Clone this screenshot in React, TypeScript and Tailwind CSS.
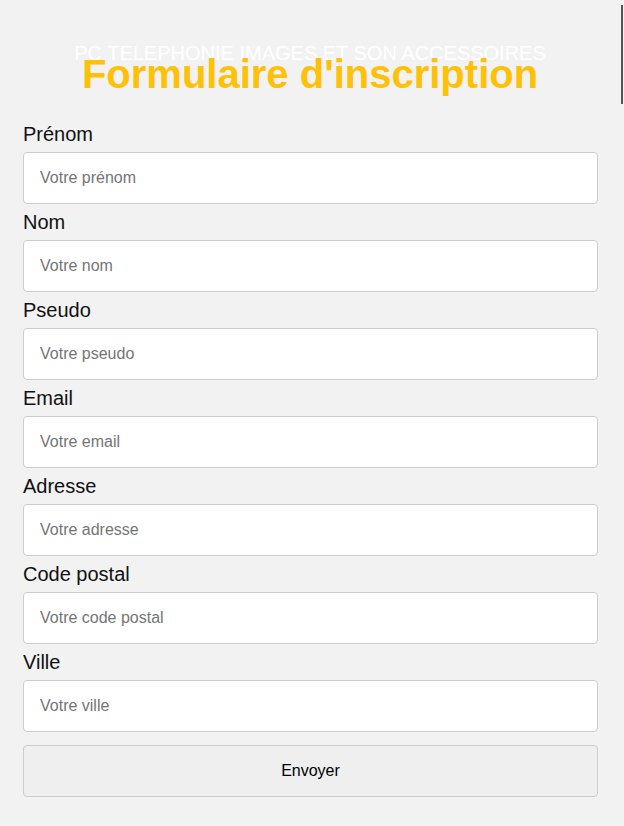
const fields = [
  { id: "prenom", label: "Prénom", placeholder: "Votre prénom" },
  { id: "nom", label: "Nom", placeholder: "Votre nom" },
  { id: "pseudo", label: "Pseudo", placeholder: "Votre pseudo" },
  { id: "email", label: "Email", placeholder: "Votre email" },
  { id: "adresse", label: "Adresse", placeholder: "Votre adresse" },
  { id: "cp", label: "Code postal", placeholder: "Votre code postal" },
  { id: "ville", label: "Ville", placeholder: "Votre ville" },
]

export default function App() {
  return (
    <div className="relative min-h-[826px] w-[624px] bg-[#f2f2f2] font-['Liberation_Sans',Arial,sans-serif]">
      {/* scrollbar edge */}
      <div className="absolute right-[1px] top-[5px] h-[99px] w-[2px] bg-[#555]" />

      <div className="pt-[41px] pr-[4px] text-center">
        <p className="text-[20px] leading-[24px] text-white">PC TELEPHONIE IMAGES ET SON ACCESSOIRES</p>
        <h1 className="-mt-[15px] text-[40px] font-bold leading-[48px] text-[#ffc107]">Formulaire d'inscription</h1>
      </div>

      <form className="mt-[24px] flex w-[575px] flex-col ml-[23px]">
        {fields.map((f) => (
          <div key={f.id} className="flex flex-col">
            <label htmlFor={f.id} className="text-[20px] leading-[24px] text-[#111]">
              {f.label}
            </label>
            <input
              id={f.id}
              placeholder={f.placeholder}
              className="mt-[6px] mb-[6px] h-[52px] rounded-[4px] border border-[#ccc] bg-white px-[16px] text-[16px] text-[#333] placeholder:text-[#757575] outline-none"
            />
          </div>
        ))}
        <button
          type="button"
          className="mt-[7px] h-[52px] rounded-[4px] border border-[#ccc] bg-[#efefef] text-[16px] text-black"
        >
          Envoyer
        </button>
      </form>
    </div>
  )
}
